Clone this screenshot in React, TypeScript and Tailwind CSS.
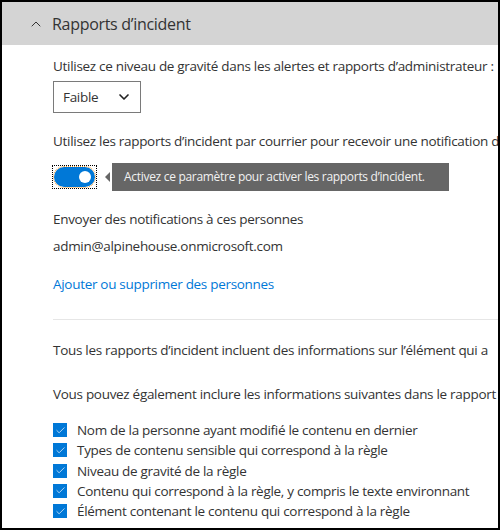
import { Check, ChevronDown, ChevronUp } from 'lucide-react';

const options = [
	'Nom de la personne ayant modifié le contenu en dernier',
	'Types de contenu sensible qui correspond à la règle',
	'Niveau de gravité de la règle',
	'Contenu qui correspond à la règle, y compris le texte environnant',
	'Élément contenant le contenu qui correspond à la règle',
];

const App = () => {
	return (
		<div className="w-[500px] h-[530px] border-2 border-black bg-white overflow-hidden text-[#333] font-['Open_Sans','Noto_Sans',sans-serif]">
			<div className="h-[43px] bg-[#d4d4d4] flex items-center pl-[26px] gap-[8px]">
				<ChevronUp size={16} strokeWidth={1.5} className="text-[#333]" />
				<span className="text-[16px] tracking-[-0.3px]">Rapports d’incident</span>
			</div>
			<div className="pl-[51px] text-[13.5px] tracking-[-0.3px] whitespace-nowrap">
				<p className="mt-[11px] leading-[20px]">Utilisez ce niveau de gravité dans les alertes et rapports d’administrateur :</p>
				<div className="mt-[5px] w-[88px] h-[32px] border border-[#7a7a7a] flex items-center justify-between pl-[9px] pr-[8px]">
					<span>Faible</span>
					<ChevronDown size={16} strokeWidth={2.5} className="text-[#222]" />
				</div>
				<p className="mt-[18px] leading-[20px]">Utilisez les rapports d’incident par courrier pour recevoir une notification de</p>
				<div className="mt-[12px] flex items-center">
					<div className="outline outline-1 outline-dotted outline-black p-[1px]">
						<div className="w-[41px] h-[20px] rounded-full bg-[#0078d7] flex items-center justify-end pr-[4px] outline outline-1 outline-dotted outline-[#f7a440]">
							<div className="w-[12px] h-[12px] rounded-full bg-white" />
						</div>
					</div>
					<div className="ml-[9px] w-0 h-0 border-y-[5px] border-y-transparent border-r-[5px] border-r-[#666]" />
					<div className="ml-[2px] h-[28px] w-[337px] bg-[#666] text-[#f2f2f2] text-[12px] tracking-[-0.3px] flex items-center pl-[12px]">
						Activez ce paramètre pour activer les rapports d’incident.
					</div>
				</div>
				<p className="mt-[18px] leading-[20px]">Envoyer des notifications à ces personnes</p>
				<p className="mt-[7px] leading-[20px]">admin@alpinehouse.onmicrosoft.com</p>
				<p className="mt-[18px] leading-[20px] text-[#0078d7]">Ajouter ou supprimer des personnes</p>
				<div className="mt-[25px] border-t border-[#e6e6e6]" />
				<p className="mt-[20px] leading-[20px]">Tous les rapports d’incident incluent des informations sur l’élément qui a</p>
				<p className="mt-[24px] leading-[20px]">Vous pouvez également inclure les informations suivantes dans le rapport</p>
				<ul className="mt-[16px] flex flex-col">
					{options.map((o) => (
						<li key={o} className="flex items-center h-[20.25px] leading-[20px]">
							<span className="w-[14px] h-[14px] bg-[#0078d7] flex items-center justify-center shrink-0">
								<Check size={11} strokeWidth={1.5} className="text-white" />
							</span>
							<span className="ml-[10px]">{o}</span>
						</li>
					))}
				</ul>
			</div>
		</div>
	);
};

export default App;
